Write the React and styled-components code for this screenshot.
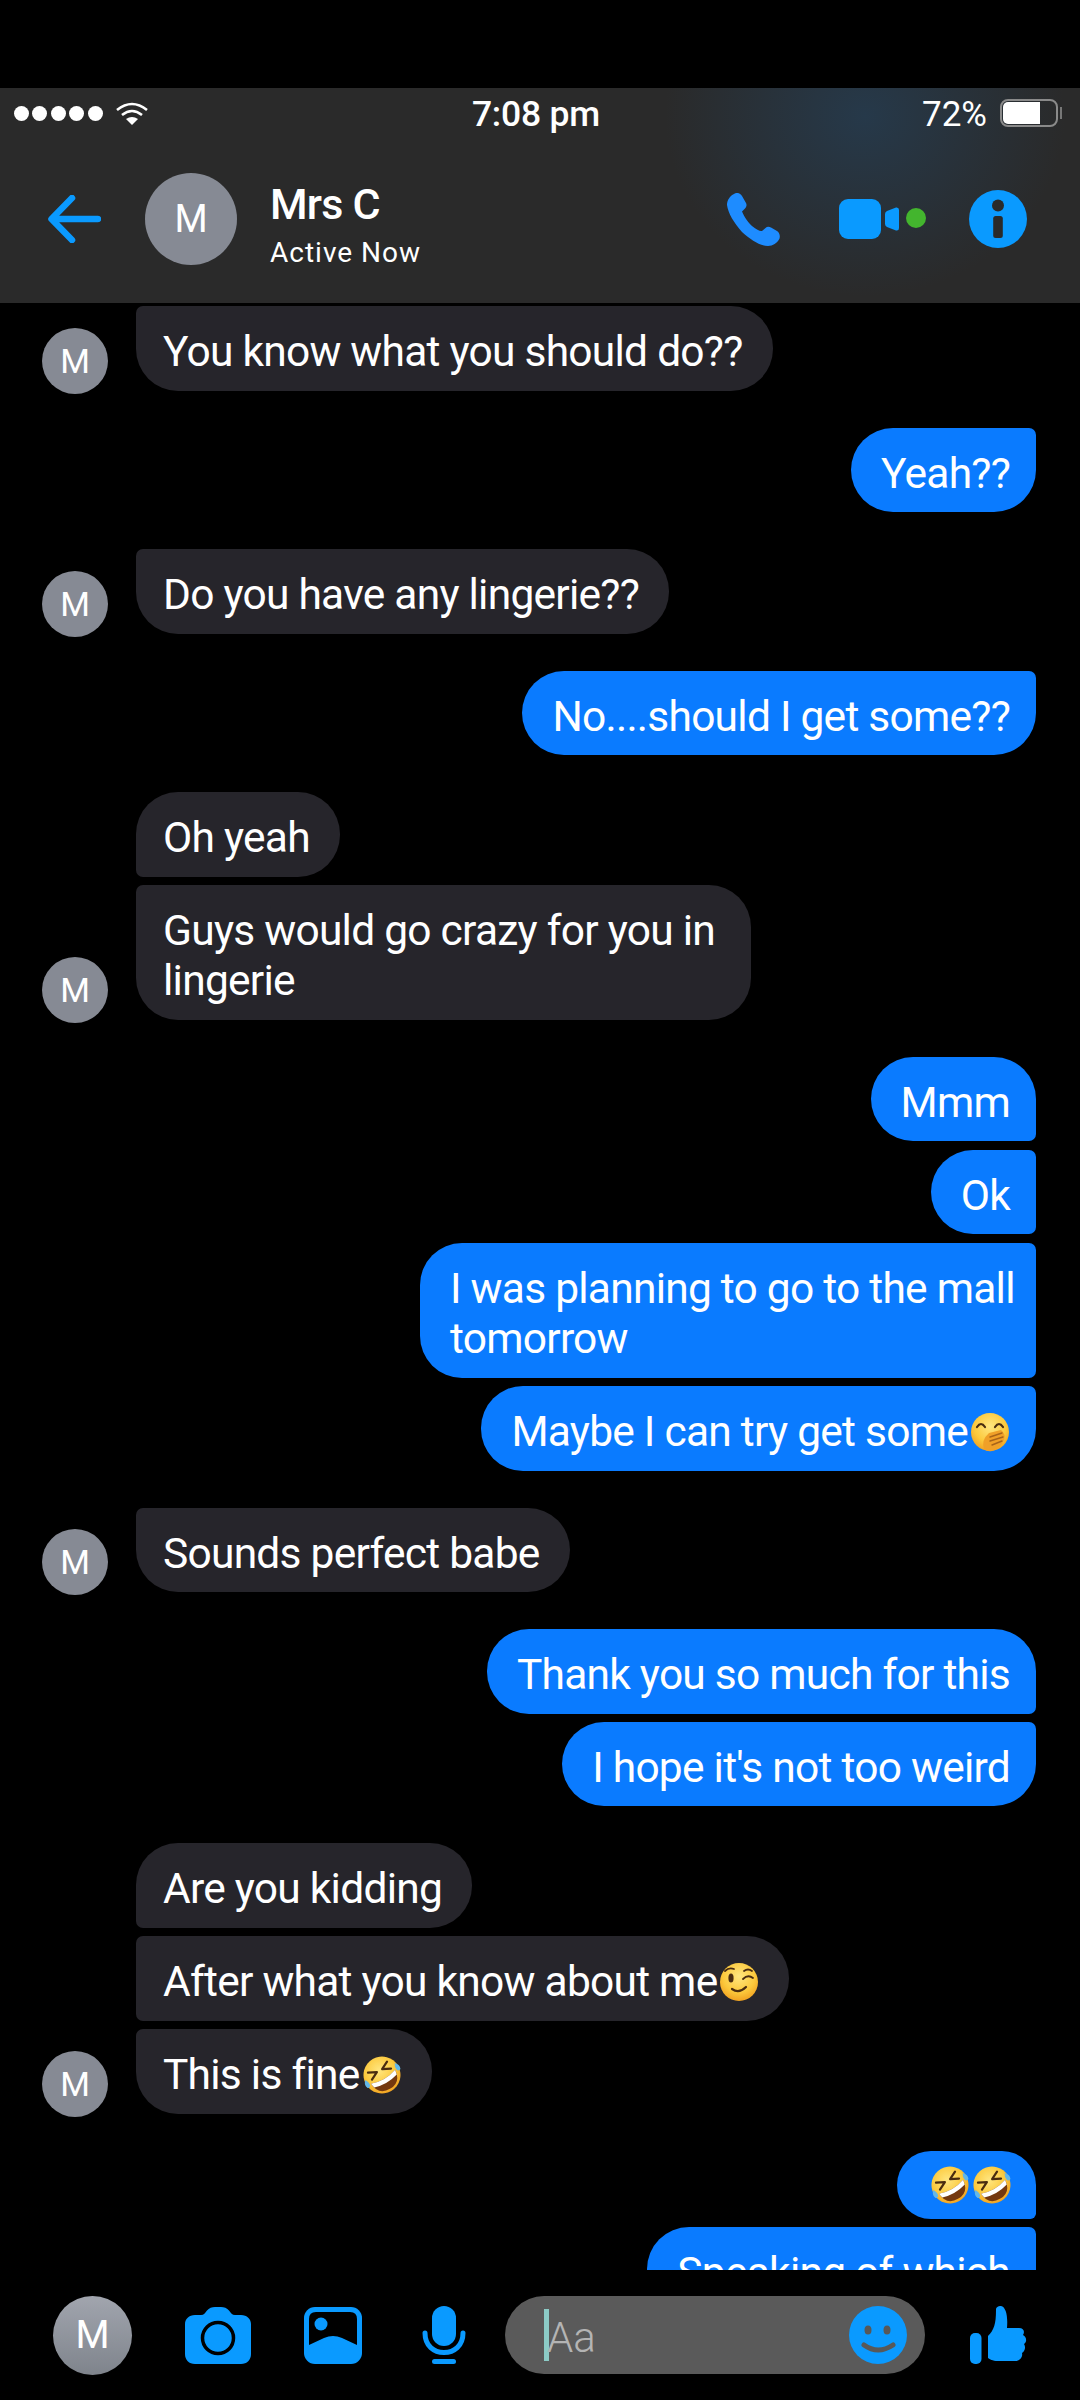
import React from 'react'
import styled, { createGlobalStyle } from 'styled-components'

const BLUE = '#0a9aff'
const FONT = 'Roboto, Inter, "Liberation Sans", sans-serif'

const GlobalStyle = createGlobalStyle`
	html, body {
		margin: 0;
		padding: 0;
		background: #000;
	}
	body {
		font-family: ${FONT};
		color: #fff;
		-webkit-font-smoothing: antialiased;
	}
`

const Page = styled.div`
	width: 1080px;
	height: 2400px;
	background: #000;
	padding-top: 88px;
	box-sizing: border-box;
	overflow: hidden;
`

const Header = styled.header`
	height: 215px;
	background: radial-gradient(ellipse 200px 180px at 865px 28px, #26394a, rgba(42, 42, 42, 0)), #2a2a2a;
`

const StatusBar = styled.div`
	height: 50px;
	display: grid;
	grid-template-columns: 1fr auto 1fr;
	align-items: center;
	padding: 0 22px 0 14px;
`

const StatusLeft = styled.div`
	display: flex;
	align-items: center;
`

const Dot = styled.span`
	width: 15px;
	height: 15px;
	margin-right: 3.4px;
	border-radius: 50%;
	background: #fff;
`

const Wifi = styled.svg`
	width: 32px;
	height: 23px;
	margin-left: 10px;
`

const Time = styled.div`
	font-size: 35.5px;
	font-weight: 500;
	letter-spacing: -0.2px;
	margin-top: 2px;
`

const StatusRight = styled.div`
	display: flex;
	align-items: center;
	justify-content: flex-end;
`

const Percent = styled.span`
	font-size: 35px;
	margin: 2px 13px 0 0;
`

const Battery = styled.div`
	width: 58px;
	height: 28px;
	box-sizing: border-box;
	border: 2px solid #8a8a8a;
	border-radius: 8px;
	padding: 1px;
	position: relative;

	&::after {
		content: '';
		position: absolute;
		right: -6px;
		top: 6px;
		width: 2px;
		height: 12px;
		background: #777;
	}
`

const BatteryFill = styled.div`
	height: 100%;
	border-radius: 5px 0 0 5px;
	background: #fff;
`

const NavRow = styled.div`
	height: 162px;
	display: flex;
	align-items: center;
	padding: 0 53px 0 48px;
`

const BackArrow = styled.svg`
	width: 53px;
	height: 48px;
	flex: none;
`

const Avatar = styled.div`
	flex: none;
	width: ${p => p.$size}px;
	height: ${p => p.$size}px;
	border-radius: 50%;
	background: ${p => p.$shaded ? 'linear-gradient(#a1a5ae, #7f848c)' : '#868a94'};
	display: flex;
	align-items: center;
	justify-content: center;
	font-size: ${p => p.$font}px;
`

const HeaderAvatar = styled(Avatar)`
	margin-left: 44px;
`

const Names = styled.div`
	margin-left: 33px;
	padding-top: 12px;
	display: flex;
	flex-direction: column;
`

const Name = styled.div`
	font-size: 43px;
	font-weight: 500;
	letter-spacing: -0.8px;
	line-height: 50px;
`

const Active = styled.div`
	font-size: 28px;
	letter-spacing: 1px;
	line-height: 36px;
	margin-top: 6px;
`

const NavActions = styled.div`
	margin-left: auto;
	display: flex;
	align-items: center;
`

const PhoneIcon = styled.svg`
	width: 53px;
	height: 53px;
	margin-right: 59px;
`

const VideoIcon = styled.svg`
	width: 87px;
	height: 40px;
	margin-right: 43px;
`

const InfoIcon = styled.svg`
	width: 58px;
	height: 58px;
`

const Chat = styled.main`
	height: 1967px;
	box-sizing: border-box;
	overflow: hidden;
	padding: 3px 44px 0 42px;
	display: flex;
	flex-direction: column;
	gap: 37px;
`

const Group = styled.section`
	flex: none;
	display: flex;
	align-items: flex-end;
	justify-content: ${p => p.$mine ? 'flex-end' : 'flex-start'};
`

const MessageAvatar = styled(Avatar)`
	margin: 0 28px -3px 0;
`

const Stack = styled.div`
	display: flex;
	flex-direction: column;
	align-items: ${p => p.$mine ? 'flex-end' : 'flex-start'};
	gap: 8.4px;
`

const SMALL = '7px'
const LARGE = '42px'

const bubblePadding = p => {
	if (p.$emojiOnly) return '14px 24px 14px 31px'
	const right = p.$width ? 20 : p.$mine ? 26 : 30
	return `21px ${right}px 13px ${p.$mine ? 30 : 27}px`
}

const Bubble = styled.div`
	box-sizing: border-box;
	width: ${p => p.$width ? p.$width + 'px' : 'fit-content'};
	padding: ${bubblePadding};
	background: ${p => p.$mine ? '#0a7bff' : '#26252b'};
	font-size: 42.5px;
	line-height: ${p => p.$emojiOnly ? '40px' : '50.5px'};
	letter-spacing: -0.75px;
	white-space: ${p => p.$width ? 'normal' : 'nowrap'};
	border-radius: ${p => {
		const top = p.$shape === 'first' ? LARGE : SMALL
		const bottom = p.$shape === 'last' ? LARGE : SMALL
		return p.$mine
			? `${LARGE} ${top} ${bottom} ${LARGE}`
			: `${top} ${LARGE} ${LARGE} ${bottom}`
	}};
`

const EmojiSvg = styled.svg`
	width: 40px;
	height: 40px;
	margin-left: 2px;
	vertical-align: ${p => p.$alone ? 'top' : '-6px'};
`

const BottomBar = styled.footer`
	height: 80px;
	margin-top: 25px;
	padding-left: 53px;
	display: flex;
	align-items: center;
`

const ToolIcon = styled.svg`
	flex: none;
	margin-left: ${p => p.$gap}px;
	width: ${p => p.$w}px;
	height: ${p => p.$h}px;
`

const Composer = styled.div`
	flex: none;
	margin-left: 39px;
	width: 420px;
	height: 78px;
	box-sizing: border-box;
	padding: 0 18px 0 39px;
	border-radius: 39px;
	background: #5a5a5a;
	display: flex;
	align-items: center;
`

const Caret = styled.span`
	width: 5px;
	height: 52px;
	background: #8ccbc6;
	flex: none;
`

const Placeholder = styled.span`
	margin: 4px 0 0 -2px;
	font-size: 42px;
	font-weight: 300;
	color: #b4b4b4;
	flex: 1;
`

const Emoji = ({ kind, alone }) => (
	<EmojiSvg viewBox="0 0 40 40" $alone={alone}>
		<defs>
			<radialGradient id="face" cx="50%" cy="35%" r="70%">
				<stop offset="0%" stopColor="#ffe680" />
				<stop offset="60%" stopColor="#fcc93c" />
				<stop offset="100%" stopColor="#ef9a1c" />
			</radialGradient>
		</defs>
		{kind === 'rofl' && (
			<g transform="rotate(-30 20 20)">
				<circle cx="20" cy="20" r="18.5" fill="url(#face)" />
				<path d="M9 11l8 4-8 4M31 11l-8 4 8 4" fill="none" stroke="#4a2c10" strokeWidth="2.2" strokeLinecap="round" strokeLinejoin="round" />
				<path d="M6 22Q20 27 34 22Q33 36 20 36Q7 36 6 22Z" fill="#74380f" />
				<path d="M6 22Q20 27 34 22L33 27Q20 31 7 27Z" fill="#fff" />
				<path d="M1 24Q-1 20 3 16Q6 21 4 24Q2 25 1 24ZM39 24Q41 20 37 16Q34 21 36 24Q38 25 39 24Z" fill="#63b7e8" />
			</g>
		)}
		{kind === 'wink' && (
			<g>
				<circle cx="20" cy="20" r="19" fill="url(#face)" />
				<ellipse cx="12" cy="16" rx="2.6" ry="4.500" fill="#4a2c10" />
				<path d="M6 9Q10 5 15 7M24 17Q29 12 34 16M25 9Q29 6 33 9" fill="none" stroke="#4a2c10" strokeWidth="1.8" strokeLinecap="round" />
				<path d="M13 27Q20 32 27 25" fill="none" stroke="#4a2c10" strokeWidth="2.2" strokeLinecap="round" />
			</g>
		)}
		{kind === 'shush' && (
			<g>
				<circle cx="20" cy="20" r="19" fill="url(#face)" />
				<path d="M7 15Q11 9 15 15M25 15Q29 9 33 15" fill="none" stroke="#4a2c10" strokeWidth="2.2" strokeLinecap="round" />
				<path d="M14 37Q11 28 19 21L31 18Q36 22 34 28Q30 37 22 39Q17 40 14 37Z" fill="#f0a028" />
				<path d="M20 25L32 21M20 29L33 25M22 33L32 29" fill="none" stroke="#a8641a" strokeWidth="1.4" strokeLinecap="round" />
			</g>
		)}
	</EmojiSvg>
)

const THREADS = [
	{ messages: [{ text: 'You know what you should do??' }] },
	{ mine: true, messages: [{ text: 'Yeah??' }] },
	{ messages: [{ text: 'Do you have any lingerie??' }] },
	{ mine: true, messages: [{ text: 'No....should I get some??' }] },
	{ messages: [{ text: 'Oh yeah' }, { text: 'Guys would go crazy for you in lingerie', width: 615 }] },
	{
		mine: true,
		messages: [
			{ text: 'Mmm' },
			{ text: 'Ok' },
			{ text: 'I was planning to go to the mall tomorrow', width: 616 },
			{ text: 'Maybe I can try get some', emoji: ['shush'] },
		],
	},
	{ messages: [{ text: 'Sounds perfect babe' }] },
	{ mine: true, messages: [{ text: 'Thank you so much for this' }, { text: "I hope it's not too weird" }] },
	{
		messages: [
			{ text: 'Are you kidding' },
			{ text: 'After what you know about me', emoji: ['wink'] },
			{ text: 'This is fine', emoji: ['rofl'] },
		],
	},
	{ mine: true, messages: [{ text: '', emoji: ['rofl', 'rofl'] }, { text: 'Speaking of which' }] },
]

// a message alone in its run is drawn like the last one of a run
const shapeOf = (i, count) => {
	if (i === count - 1) return 'last'
	return i === 0 ? 'first' : 'middle'
}

const App = () => (
	<Page>
		<GlobalStyle />
		<Header>
			<StatusBar>
				<StatusLeft>
					<Dot /><Dot /><Dot /><Dot /><Dot />
					<Wifi viewBox="0 0 32 23">
						<path d="M1 8Q16 -4 31 8" fill="none" stroke="#fff" strokeWidth="2.6" />
						<path d="M6 13Q16 5 26 13" fill="none" stroke="#fff" strokeWidth="2.6" />
						<path d="M10 17Q16 13 22 17L16 23Z" fill="#fff" />
					</Wifi>
				</StatusLeft>
				<Time>7:08 pm</Time>
				<StatusRight>
					<Percent>72%</Percent>
					<Battery>
						<BatteryFill style={{ width: '72%' }} />
					</Battery>
				</StatusRight>
			</StatusBar>
			<NavRow>
				<BackArrow viewBox="0 0 53 48">
					<path d="M50 24H4M24 3L3.500 24L24 45" fill="none" stroke={BLUE} strokeWidth="6.500" strokeLinecap="round" strokeLinejoin="round" />
				</BackArrow>
				<HeaderAvatar $size={92} $font={38}>M</HeaderAvatar>
				<Names>
					<Name>Mrs C</Name>
					<Active>Active Now</Active>
				</Names>
				<NavActions>
					<PhoneIcon viewBox="0 0 53 53">
						<path d="M7 1C10-1 13 0 15 3L19 10C20 12 19.500 14 18 15.500L15 18.500C17.500 24 20 28 25 33C30 37 33 38.500 35 38L38.500 35C40 33.500 42 33.500 44 34.500L50 38C53 40 53.500 44 52 46.500C50 50 46 53 41 53C33 53 24 47 15 39C7 30 1 20 0 12C0 7 3 3 7 1Z" fill="#1e8cff" />
					</PhoneIcon>
					<VideoIcon viewBox="0 0 87 40">
						<rect width="42" height="40" rx="9" fill={BLUE} />
						<path d="M46 15Q46 13 48 12L57 8.500Q60 8 60 11V29Q60 32 57 31.500L48 28Q46 27 46 25Z" fill={BLUE} />
						<circle cx="77" cy="19" r="10" fill="#43b52e" />
					</VideoIcon>
					<InfoIcon viewBox="0 0 58 58">
						<circle cx="29" cy="29" r="29" fill={BLUE} />
						<circle cx="29" cy="15.500" r="6" fill="#2a2a2a" />
						<rect x="24.200" y="26" width="9.600" height="22" rx="2.500" fill="#2a2a2a" />
					</InfoIcon>
				</NavActions>
			</NavRow>
		</Header>

		<Chat>
			{THREADS.map((thread, t) => (
				<Group key={t} $mine={thread.mine}>
					{!thread.mine && <MessageAvatar $size={66} $font={34}>M</MessageAvatar>}
					<Stack $mine={thread.mine}>
						{thread.messages.map((m, i) => (
							<Bubble
								key={i}
								$mine={thread.mine}
								$width={m.width}
								$emojiOnly={!m.text}
								$shape={thread.messages.length === 1 ? 'last' : shapeOf(i, thread.messages.length)}
							>
								{m.text}
								{m.emoji && m.emoji.map((kind, e) => <Emoji key={e} kind={kind} alone={!m.text} />)}
							</Bubble>
						))}
					</Stack>
				</Group>
			))}
		</Chat>

		<BottomBar>
			<Avatar $size={79} $font={39} $shaded>M</Avatar>
			<ToolIcon $gap={53} $w={66} $h={57} viewBox="0 0 66 57">
				<path d="M10 8H16C19 8 20 6 22 3.500C24 1 27 0 30 0H36C39 0 42 1 44 3.500C46 6 47 8 50 8H56C62 8 66 12 66 17V47C66 53 62 57 56 57H10C4 57 0 53 0 47V17C0 12 4 8 10 8Z" fill={BLUE} />
				<circle cx="33" cy="31" r="15.500" fill="none" stroke="#000" strokeWidth="3.500" />
			</ToolIcon>
			<ToolIcon $gap={53} $w={58} $h={57} viewBox="0 0 58 57">
				<rect width="58" height="57" rx="11" fill={BLUE} />
				<path d="M5 38V12Q5 5 12 5H46Q53 5 53 12V38L38 31Q29 27 20 31Z" fill="#000" />
				<circle cx="17" cy="17" r="6.500" fill={BLUE} />
			</ToolIcon>
			<ToolIcon $gap={60} $w={44} $h={58} viewBox="0 0 44 58">
				<rect x="10" width="24" height="40" rx="12" fill={BLUE} />
				<path d="M3 27C3 40 12 46.500 22 46.500C32 46.500 41 40 41 27" fill="none" stroke={BLUE} strokeWidth="5" strokeLinecap="round" />
				<rect x="10" y="53" width="24" height="5" rx="2.500" fill={BLUE} />
			</ToolIcon>
			<Composer>
				<Caret />
				<Placeholder>Aa</Placeholder>
				<svg width="58" height="58" viewBox="0 0 58 58">
					<circle cx="29" cy="29" r="29" fill={BLUE} />
					<ellipse cx="19" cy="24" rx="3.500" ry="4.500" fill="#585858" />
					<ellipse cx="38" cy="24" rx="3.500" ry="4.500" fill="#585858" />
					<path d="M15 39Q29 49 44 39" fill="none" stroke="#585858" strokeWidth="5" strokeLinecap="round" />
				</svg>
			</Composer>
			<ToolIcon $gap={45} $w={57} $h={58} viewBox="0 0 57 58">
				<rect y="27" width="11.500" height="31" rx="5" fill={BLUE} />
				<path d="M18 30C24 24 26 18 26 4C26 1 28 0 31 0C36 1 38 10 37 22H49C54 22 55 26 53 29C57 31 57 36 54 38C56 41 55 45 52 47C53 51 50 55 45 55H28C22 55 20 53 18 52Z" fill={BLUE} />
			</ToolIcon>
		</BottomBar>
	</Page>
)

export default App
